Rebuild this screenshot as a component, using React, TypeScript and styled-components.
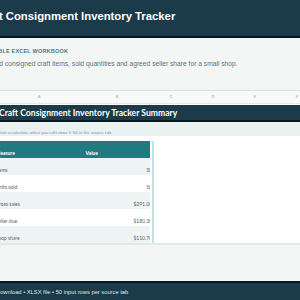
import styled, { createGlobalStyle } from 'styled-components'

const GlobalStyle = createGlobalStyle`
  html, body {
    margin: 0;
    padding: 0;
    background: #ffffff;
    overflow: hidden;
  }
`

const dark = '#1b3a4a'
const teal = '#217a80'

// the page is wider than the window and sits scrolled a little to the right
const Page = styled.div`
  width: 390px;
  margin-left: -30px;
  display: flex;
  flex-direction: column;
`

const Header = styled.header`
  background: ${dark};
  height: 38px;
  border-bottom: 2px solid #0b161c;
  padding: 10px 0 0 6.3px;
  box-sizing: border-box;
`

const Title = styled.h1`
  margin: 0;
  font-family: 'Liberation Sans', Arial, sans-serif;
  font-weight: 700;
  font-size: 11.3px;
  line-height: 13px;
  color: #ffffff;
`

const Intro = styled.section`
  background: #f4f6f6;
  border-bottom: 1px solid #d9dfdf;
  height: 53px;
  box-sizing: border-box;
  padding: 9px 0 0 7px;
  display: flex;
  flex-direction: column;
  gap: 4px;
  font-family: 'Liberation Sans', Arial, sans-serif;
`

const Eyebrow = styled.div`
  font-size: 5.5px;
  line-height: 8px;
  font-weight: 700;
  letter-spacing: 0.2px;
  color: #3c7f88;
`

const Lead = styled.p`
  margin: 0;
  padding-left: 4.5px;
  font-size: 6.7px;
  line-height: 9px;
  color: #6a6f72;
`

const Sheet = styled.div`
  height: 152px;
  overflow: hidden;
  background: #ffffff;
  font-family: Lato, 'Open Sans', sans-serif;
  display: flex;
  flex-direction: column;
`

const ColHeads = styled.div`
  display: grid;
  grid-template-columns: 24px 90px 66px repeat(5, 42px);
  height: 12px;
  background: #f8f9f9;
  border-bottom: 1px solid #e3e7e7;
`

const ColHead = styled.div`
  font-size: 4px;
  line-height: 12px;
  text-align: center;
  color: #9aa0a3;
`

const SheetTitle = styled.div`
  margin-top: 1px;
  background: ${dark};
  border-bottom: 2px solid #0b161c;
  height: 17px;
  box-sizing: border-box;
  padding: 2px 0 0 29px;
  font-weight: 700;
  font-size: 8.6px;
  line-height: 13px;
  color: #ffffff;
`

const Note = styled.div`
  background: #e9f1f1;
  height: 16px;
  box-sizing: border-box;
  padding: 8px 0 0 25.5px;
  font-size: 4.4px;
  line-height: 6px;
  color: #8b9294;
`

const Table = styled.div`
  margin: 5px 0 0 24px;
  width: 158px;
  display: grid;
  grid-template-columns: 90px 66px;
  border-right: 2px solid #c4e2e5;
`

const Cell = styled.div<{ head?: boolean; stripe?: boolean; num?: boolean }>`
  height: 17px;
  box-sizing: border-box;
  display: flex;
  align-items: flex-end;
  justify-content: ${p => (p.num ? 'flex-end' : 'flex-start')};
  overflow: hidden;
  padding: 0 0 2px ${p => (p.num ? 0 : 1.5)}px;
  background: ${p => (p.head ? teal : p.stripe ? '#eef4f4' : '#ffffff')};
  color: ${p => (p.head ? '#ffffff' : '#5c6264')};
  font-weight: ${p => (p.head ? 700 : 400)};
  font-size: 5px;
  line-height: 6px;
  white-space: nowrap;
`

const NumText = styled.span`
  margin-right: -2px;
`

const Outro = styled.section`
  border-top: 2px solid #e3e8e8;
  background: #f4f6f6;
  height: 38px;
  box-sizing: border-box;
`

const Footer = styled.footer`
  background: ${dark};
  border-top: 2px solid #0b161c;
  height: 26px;
  box-sizing: border-box;
  padding: 6px 0 0 26px;
  font-family: 'Liberation Sans', Arial, sans-serif;
  font-size: 5.75px;
  line-height: 7px;
  color: #dfe8eb;
`

const rows = [
  ['Items', '30'],
  ['Units sold', '58'],
  ['Gross sales', '$291.00'],
  ['Seller due', '$180.30'],
  ['Shop share', '$110.70'],
]

export default function App() {
  return (
    <Page>
      <GlobalStyle />
      <Header>
        <Title>Craft Consignment Inventory Tracker</Title>
      </Header>
      <Intro>
        <Eyebrow>PRINTABLE EXCEL WORKBOOK</Eyebrow>
        <Lead>
          Record consigned craft items, sold quantities and agreed seller share for a small shop.
        </Lead>
      </Intro>
      <Sheet>
        <ColHeads>
          <ColHead />
          {['A', 'B', 'C', 'D', 'E', 'F', 'G'].map(c => (
            <ColHead key={c}>{c}</ColHead>
          ))}
        </ColHeads>
        <SheetTitle>Craft Consignment Inventory Tracker Summary</SheetTitle>
        <Note>Totals recalculate when you edit rows 5-54 in the source tab.</Note>
        <Table>
          <Cell head>Measure</Cell>
          <Cell head>Value</Cell>
          {rows.map(([label, value], i) => [
            <Cell key={label} stripe={i % 2 === 0}>
              {label}
            </Cell>,
            <Cell key={label + '-v'} stripe={i % 2 === 0} num>
              <NumText>{value}</NumText>
            </Cell>,
          ])}
        </Table>
      </Sheet>
      <Outro />
      <Footer>Download • XLSX file • 50 input rows per source tab</Footer>
    </Page>
  )
}
